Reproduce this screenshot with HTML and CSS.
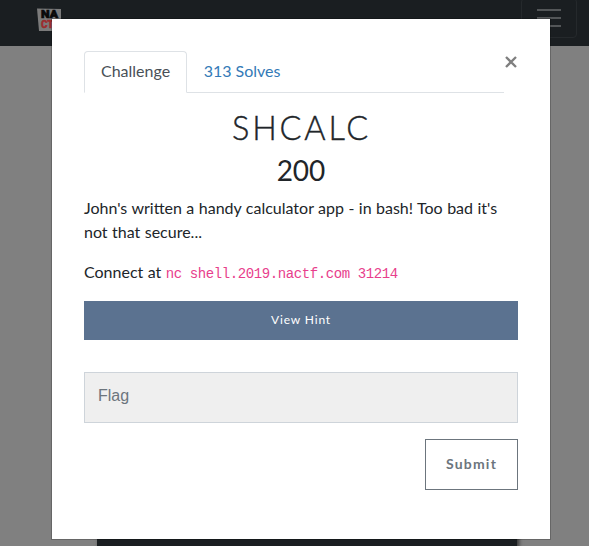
FILE: index.html
```
<!DOCTYPE html>
<html lang="en">
<head>
<meta charset="utf-8">
<title>SHCALC</title>
<link rel="stylesheet" href="styles.css">
</head>
<body>
<div class="page">
  <header class="navbar">
    <svg class="logo" width="25" height="24" viewBox="0 0 25 24">
      <path class="logo-paper" d="M0 0.5L24 1V23L2 23Z"/>
      <text class="logo-name" x="4" y="9.5" textLength="17" lengthAdjust="spacingAndGlyphs">NA</text>
      <text class="logo-ctf" x="4" y="20" textLength="18" lengthAdjust="spacingAndGlyphs">CTF</text>
    </svg>
    <button class="toggler" aria-label="Menu"><span></span><span></span><span></span></button>
  </header>
  <div class="challenge-tile"></div>
</div>
<main class="modal">
  <div class="modal-top">
    <nav class="tabs">
      <a class="tab active">Challenge</a>
      <a class="tab">313 Solves</a>
    </nav>
    <button class="close" aria-label="Close"><svg width="12" height="12" viewBox="0 0 12 12"><path d="M1 1L11 11M11 1L1 11"/></svg></button>
  </div>
  <h2 class="name">SHCALC</h2>
  <h3 class="value">200</h3>
  <p class="text">John's written a handy calculator app - in bash! Too bad it's not that secure...</p>
  <p class="text">Connect at <code>nc shell.2019.nactf.com 31214</code></p>
  <button class="hint">View Hint</button>
  <input class="flag" type="text" placeholder="Flag">
  <button class="submit">Submit</button>
</main>
</body>
</html>
```
FILE: styles.css
```
* { box-sizing: border-box; }
body {
  margin: 0;
  height: 546px;
  overflow: hidden;
  background: #808080;
  color: #212529;
  font: 16px/24px Lato, sans-serif;
}
.page {
  height: 546px;
  display: flex;
  flex-direction: column;
  justify-content: space-between;
}
.navbar {
  height: 46px;
  padding: 0 12px 0 37px;
  display: flex;
  justify-content: space-between;
  align-items: flex-start;
  background: #1a1e21;
}
.logo { margin-top: 8px; }
.logo-paper { fill: #7b7b7b; }
.logo-name, .logo-ctf { font: 900 10px Roboto, sans-serif; }
.logo-name { fill: #090909; stroke: #090909; stroke-width: .6; }
.logo-ctf { fill: #9c2c2d; stroke: #9c2c2d; stroke-width: .4; }
.toggler {
  width: 56px;
  height: 40px;
  margin-top: -2px;
  padding: 10px 15px;
  display: flex;
  flex-direction: column;
  gap: 6px;
  background: none;
  border: 1px solid #25292c;
  border-radius: 4px;
}
.toggler span {
  flex: none;
  width: 24px;
  height: 2px;
  background: #535658;
}
.challenge-tile {
  width: 420px;
  height: 20px;
  margin-left: 97px;
  background: #1a1e21;
  box-shadow: 2px 2px 4px rgba(0, 0, 0, .6);
}
.modal {
  position: absolute;
  left: 51px;
  top: 18px;
  width: 500px;
  height: 522px;
  padding: 32px;
  display: flex;
  flex-direction: column;
  background: #fff;
  background-clip: padding-box;
  border: 1px solid rgba(0, 0, 0, .2);
}
.modal-top {
  display: flex;
  justify-content: space-between;
  height: 42px;
}
.tabs {
  width: 420px;
  display: flex;
  border-bottom: 1px solid #dee2e6;
}
.tab {
  height: 42px;
  padding: 7px 16px;
  border: 1px solid transparent;
  border-radius: 4px 4px 0 0;
  color: #337ab7;
}
.tab + .tab { margin-left: -.5px; }
.tab.active {
  background: #fff;
  border-color: #dee2e6 #dee2e6 #fff;
  color: #495057;
}
.close {
  width: 12px;
  height: 12px;
  margin: 5px 1px 0 0;
  padding: 0;
  border: 0;
  background: none;
}
.close svg { display: block; }
.close path { stroke: #7f7f7f; stroke-width: 2.3; }
.name {
  margin: 16px 0 0;
  font-size: 32.5px;
  font-weight: 300;
  line-height: 38px;
  letter-spacing: 2.8px;
  text-indent: 1px;
  text-align: center;
  -webkit-text-stroke: .4px #212529;
}
.value {
  margin: 5px 0 8px;
  font-size: 28px;
  font-weight: 400;
  line-height: 36px;
  text-align: center;
}
.text {
  margin: 0 0 16px;
  word-spacing: .35px;
}
code {
  font: 14px "Liberation Mono", monospace;
  letter-spacing: -.4px;
  word-spacing: 0;
  color: #e83e8c;
}
.hint {
  flex: none;
  height: 39px;
  margin-top: 1px;
  padding: 0 0 2px;
  border: 0;
  background: #5b7290;
  color: #fff;
  font: 12px Lato, sans-serif;
  letter-spacing: .85px;
}
.flag {
  flex: none;
  height: 51px;
  margin: 32px 0 16px;
  padding: 0 13px 4px;
  border: 1px solid #ced4da;
  border-radius: 0;
  background: #efefef;
  font: 16px "Liberation Sans", sans-serif;
}
.flag::placeholder { color: #6c757d; opacity: 1; }
.submit {
  flex: none;
  align-self: flex-end;
  width: 93px;
  height: 51px;
  padding: 0 0 2px;
  border: 1px solid #6c757d;
  background: #fff;
  color: #6c757d;
  font: bold 14px Lato, sans-serif;
  letter-spacing: 1.2px;
}
```
